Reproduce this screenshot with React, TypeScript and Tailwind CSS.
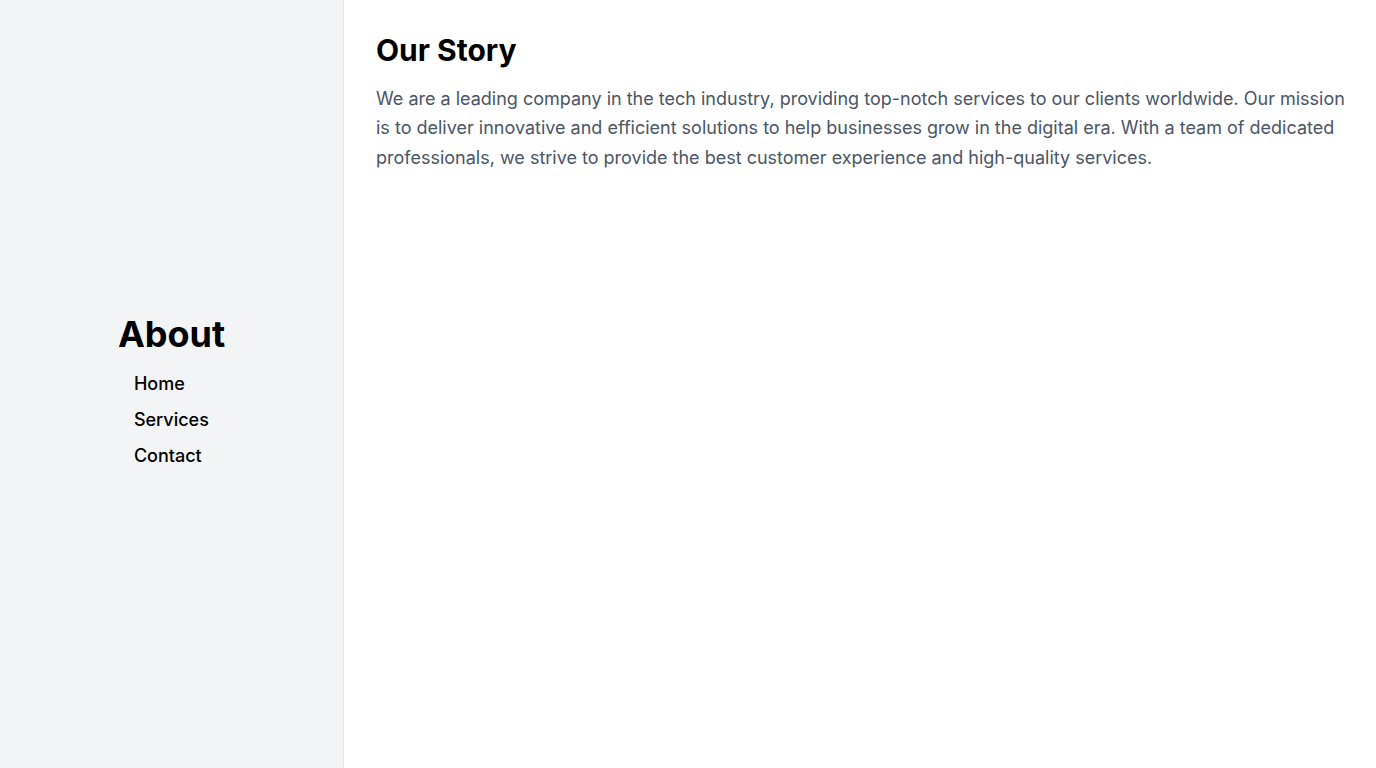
export default function App() {
  return (
    <div className="flex h-[768px] w-full bg-white" style={{ fontFamily: "Inter, 'Noto Sans', sans-serif" }}>
      <aside className="flex w-[344px] shrink-0 flex-col items-center justify-center border-r border-gray-200 bg-gray-100 pt-[20px]">
        <div>
          <h1 className="mb-3 text-4xl font-bold text-black">About</h1>
          <nav className="flex flex-col">
            <a className="px-4 py-1 text-lg font-medium text-black">Home</a>
            <a className="px-4 py-1 text-lg font-medium text-black">Services</a>
            <a className="px-4 py-1 text-lg font-medium text-black">Contact</a>
          </nav>
        </div>
      </aside>
      <main className="flex-1 py-8 pl-8 pr-6">
        <h2 className="mb-4 text-3xl font-bold text-black">Our Story</h2>
        <p className="text-lg leading-relaxed text-gray-600">
          We are a leading company in the tech industry, providing top-notch services to our clients worldwide. Our mission is to deliver innovative and efficient solutions to help businesses grow in the digital era. With a team of dedicated professionals, we strive to provide the best customer experience and high-quality services.
        </p>
      </main>
    </div>
  );
}
